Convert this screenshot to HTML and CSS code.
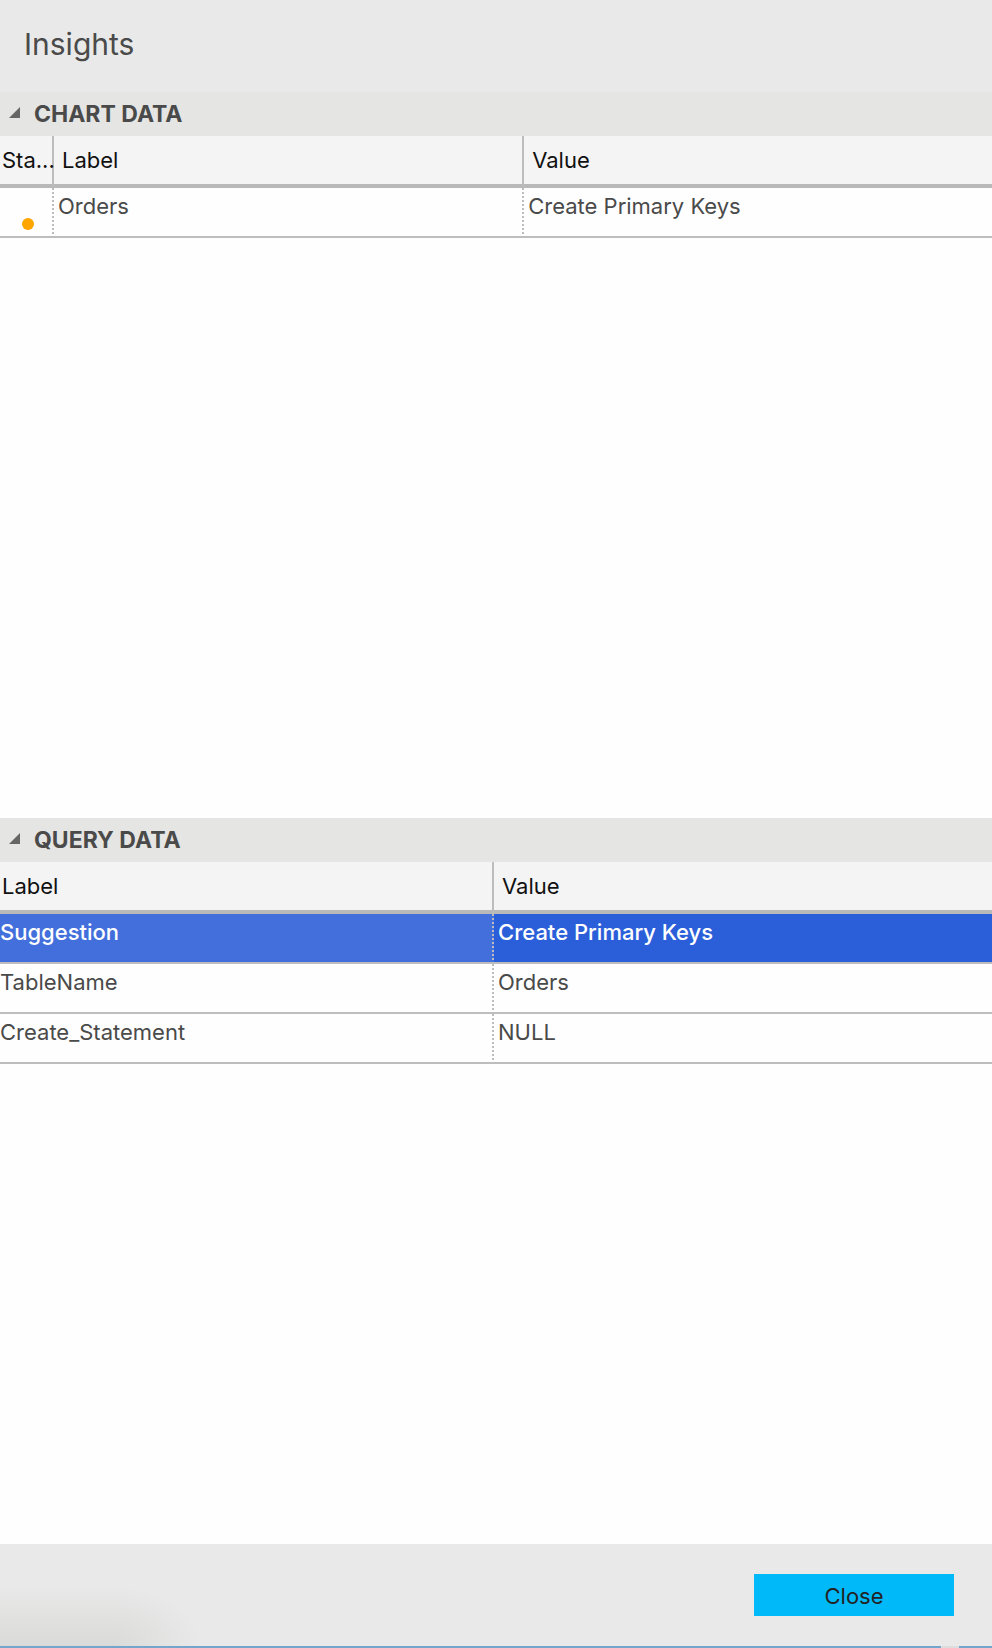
FILE: index.html
```html
<!DOCTYPE html>
<html lang="en">
<head>
<meta charset="utf-8">
<meta name="viewport" content="width=device-width, initial-scale=1">
<title>Insights</title>
<link rel="stylesheet" href="styles.css">
</head>
<body class="panel">
<header class="panel-header">
  <h1 class="panel-title">Insights</h1>
</header>
<main class="panel-body">
  <section class="group">
    <h2 class="group-title">
      <svg class="group-arrow" viewBox="0 0 11 14" aria-hidden="true"><path d="M11 0V11H0Z"/></svg>
      Chart Data
    </h2>
    <table class="grid">
      <colgroup><col class="col-status"><col class="col-label"><col></colgroup>
      <thead>
        <tr><th scope="col">Sta...</th><th scope="col">Label</th><th scope="col">Value</th></tr>
      </thead>
      <tbody>
        <tr><td><span class="status-dot"></span></td><td>Orders</td><td>Create Primary Keys</td></tr>
      </tbody>
    </table>
  </section>
  <section class="group">
    <h2 class="group-title">
      <svg class="group-arrow" viewBox="0 0 11 14" aria-hidden="true"><path d="M11 0V11H0Z"/></svg>
      Query Data
    </h2>
    <table class="grid">
      <colgroup><col class="col-half"><col></colgroup>
      <thead>
        <tr><th scope="col">Label</th><th scope="col">Value</th></tr>
      </thead>
      <tbody>
        <tr class="selected"><td>Suggestion</td><td>Create Primary Keys</td></tr>
        <tr><td>TableName</td><td>Orders</td></tr>
        <tr><td>Create_Statement</td><td>NULL</td></tr>
      </tbody>
    </table>
  </section>
</main>
<footer class="panel-footer">
  <button class="close-button" type="button">Close</button>
</footer>
</body>
</html>
```
FILE: styles.css
```css
* {
  box-sizing: border-box;
}

.panel {
  display: flex;
  flex-direction: column;
  min-height: 100vh;
  margin: 0;
  background: #fefefe;
  color: #4a4a4a;
  font: 22px/28px Inter, "Liberation Sans", sans-serif;
}

.panel-header {
  padding: 24px 24px 28px;
  background: #e9e9e9;
}

.panel-title {
  margin: 0;
  font-size: 30px;
  font-weight: 400;
  line-height: 40px;
}

.panel-body {
  display: flex;
  flex: 1;
  flex-direction: column;
}

.group {
  flex: 1 1 0;
}

.group-title {
  display: flex;
  align-items: center;
  gap: 14px;
  margin: 0;
  padding: 8px 9px;
  background: #e5e5e3;
  font-size: 23px;
  font-weight: 700;
  line-height: 28px;
  text-transform: uppercase;
}

.group-arrow {
  width: 11px;
  height: 14px;
  fill: #666;
}

.grid {
  width: 100%;
  border-collapse: separate;
  border-spacing: 0;
  table-layout: fixed;
}

.col-status {
  width: 54px;
}

.col-label {
  width: 47.4%;
}

.col-half {
  width: 49.8%;
}

.grid th {
  padding: 10px 0 10px 8px;
  border-right: 2px solid #bdbdbd;
  border-bottom: 4px solid #b9b9b9;
  background: #f4f4f4;
  color: #111;
  font-weight: 400;
  text-align: left;
  white-space: nowrap;
}

.grid th:first-child {
  padding-left: 2px;
}

.grid td {
  height: 50px;
  padding: 4px;
  border-right: 2px dotted #bdbdbd;
  border-bottom: 2px solid #bdbdbd;
  vertical-align: top;
}

.grid td:first-child {
  padding-left: 0;
}

.grid th:last-child,
.grid td:last-child {
  border-right: 0;
}

.grid .selected td {
  background: #2b5fda;
  color: #fff;
  font-weight: 500;
}

.grid .selected td:first-child {
  background: #426fdc;
}

.status-dot {
  display: block;
  width: 12px;
  height: 12px;
  margin: 26px 0 0 22px;
  border-radius: 50%;
  background: #ffa500;
}

.panel-footer {
  display: flex;
  justify-content: flex-end;
  padding: 30px 38px;
  border-bottom: 2px solid;
  border-image: linear-gradient(to left, #75a5cb 35px, #dddddd 35px 53px, #75a5cb 53px) 2;
  background:
    linear-gradient(to top, #dadad9, #e9e9e9) left bottom / 110px 60px no-repeat,
    radial-gradient(ellipse 90px 60px at 110px 100%, #dadad9, #e9e9e9);
}

.close-button {
  width: 200px;
  padding: 8px 7px 6px;
  border: 0;
  background: #00b9f8;
  color: #222;
  font: inherit;
}
```
